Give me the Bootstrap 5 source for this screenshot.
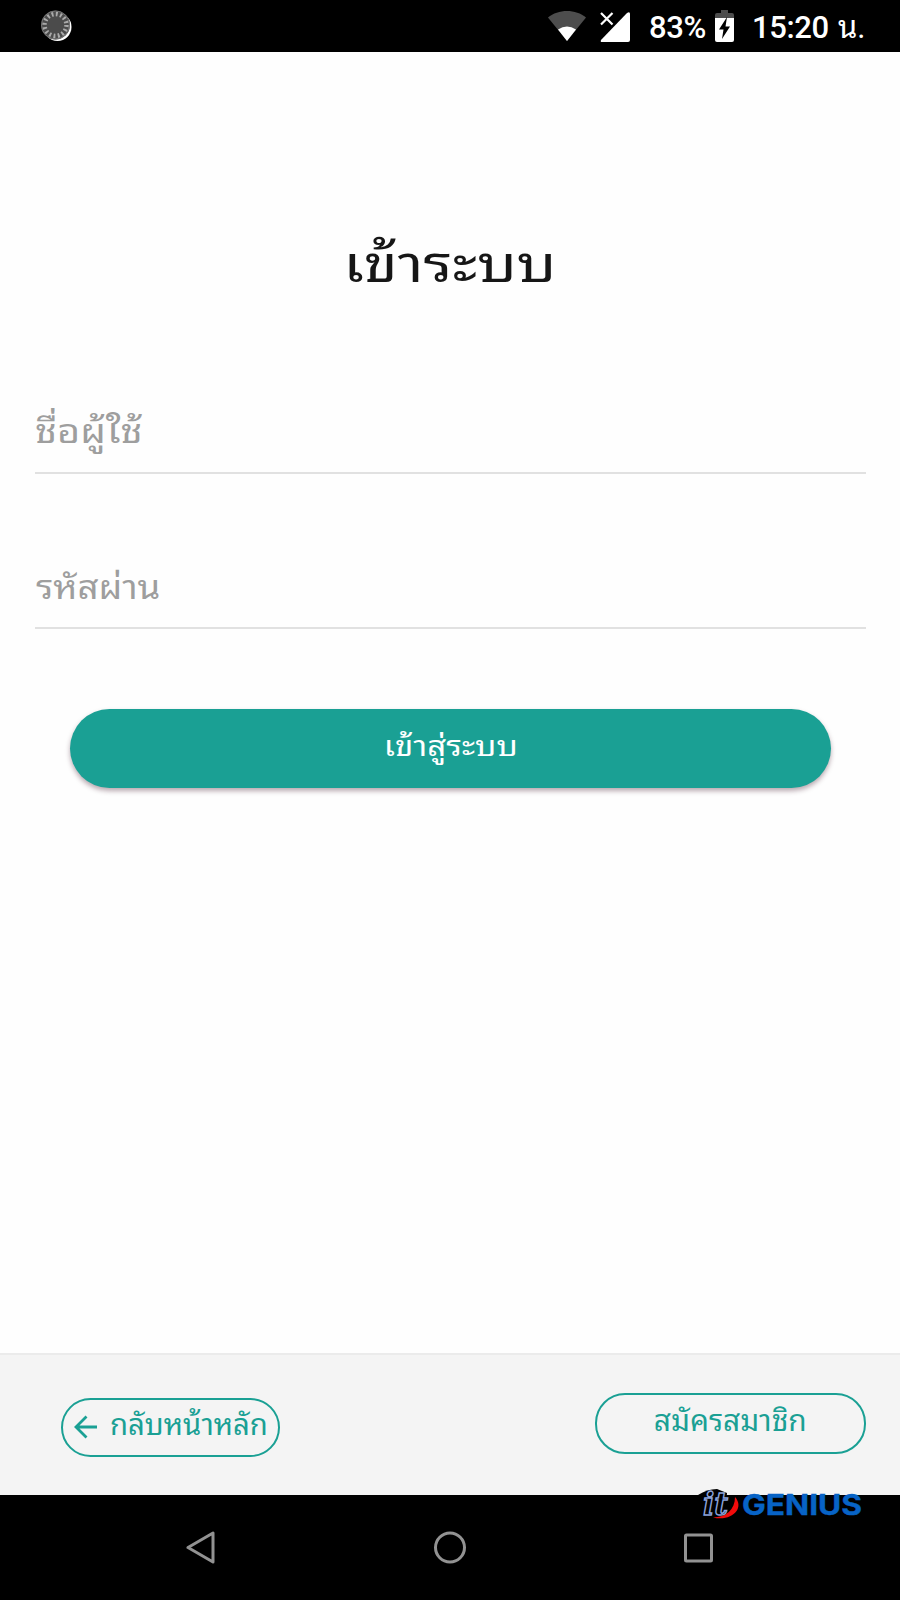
<!DOCTYPE html>
<html lang="th">
<head>
<meta charset="utf-8">
<meta name="viewport" content="width=device-width, initial-scale=1">
<title>เข้าระบบ</title>
<link href="https://cdn.jsdelivr.net/npm/bootstrap@5.3.0/dist/css/bootstrap.min.css" rel="stylesheet">
<style>
body{font-family:Roboto,"Noto Sans Thai Looped","Noto Looped Thai",Loma,"Droid Sans Thai",Waree,Garuda,Umpush,sans-serif;background:#fefefe;color:#161616}
.screen{height:1600px;width:900px;overflow:hidden}
svg{display:block;flex:none}
.statusbar{height:52px;background:#000;color:#fff;font-size:31px;font-weight:500;line-height:56px;padding:0 36px 0 40px}
.statusbar span{white-space:nowrap}
.status-icon{margin-top:9px}
.signal{margin-left:14px}
.battery{margin-left:11px}
.pct{width:55px;margin-left:18px;letter-spacing:-.4px}
.time{width:76px;margin-left:18px;letter-spacing:-.4px}
.thai-n{width:26px;margin-left:10px;font-weight:400}
.login-title{font-size:51px;line-height:80px;margin:173px 0 0;font-weight:400}
.login-title span{display:inline-block;transform:scaleX(1.2)}
.login-form{padding:0 34px 0 35px}
.field-row{height:155px;border-bottom:2px solid #e1e1e1;padding-top:84px;line-height:60px;font-size:33px;color:#9e9e9e}
.field-row label{display:inline-block;transform-origin:0 50%;white-space:nowrap}
.field-user{margin-top:14px;padding-top:83px}
.field-user label{transform:scaleX(1.2)}
.field-pass label{transform:scaleX(1.11);margin-left:1px}
.btn-teal{margin:80px 35px 0;height:79px;border:0;border-radius:40px;background:#1aa094;color:#fff;font-size:28px;padding:0 0 3px;box-shadow:0 3px 5px rgba(60,20,40,.36)}
.btn-teal span{display:inline-block;transform:scaleX(1.18)}
.bottombar{height:142px;background:#f4f4f4;border-top:2px solid #ebebeb;padding:0 34px 0 61px}
.btn-pill{border:2px solid #1aa094;border-radius:30px;color:#1aa094;padding:0;font-size:29px;white-space:nowrap}
.btn-home{width:219px;height:59px;margin-top:43px;line-height:51px;padding-left:11px}
.home-label{margin-left:12px;display:inline-block;transform:scaleX(1.01);transform-origin:0 50%}
.btn-join{width:271px;height:61px;margin-top:38px;padding-bottom:4px}
.btn-join span{display:inline-block;transform:scaleX(1.03)}
.navkeys{height:105px;background:#000;padding:33px 186px 0}
.brand{left:695px;top:1484px}
</style>
</head>
<body>
<main class="screen d-flex flex-column position-relative">
  <header class="statusbar d-flex">
    <svg class="status-icon" width="33" height="33" viewBox="0 0 33 33">
      <circle cx="17.500" cy="18" r="14" fill="#fff"/>
      <circle cx="15.500" cy="16" r="14.500" fill="#4b4b4b"/>
      <circle cx="15.500" cy="16" r="11" fill="none" stroke="#aaa" stroke-width="4.500" stroke-dasharray="1.900 2.420"/>
      <circle cx="15.500" cy="16" r="14" fill="none" stroke="#777" stroke-width="1"/>
    </svg>
    <svg class="ms-auto" width="38" height="52" viewBox="0 0 38 52"><path d="M19 41 0 17.500C10 8.700 28 8.700 38 17.500Z" fill="#4d4d4d"/><path d="M19 41 10 29.500Q19 23.500 28 29.500Z" fill="#fff"/></svg>
    <svg class="signal" width="31" height="52" viewBox="0 0 31 52"><path d="M30 14v26q0 2-2 2H2q-2 0-1-2L27 13q3-2 3 1Z" fill="#fff"/><path d="m1 13 11.500 11.500M12.500 13 1 24.500" stroke="#fff" stroke-width="2.200"/></svg>
    <span class="pct">83%</span>
    <svg class="battery" width="19" height="52" viewBox="0 0 19 52"><path d="M0 18v-3q0-2 2-2h4v-3h7v3h4q2 0 2 2v3Z" fill="#4d4d4d"/><path d="M0 18h19v22q0 2-2 2H2q-2 0-2-2Z" fill="#fff"/><path d="M12 17 4 29.500h4.500L7 39l8-12.500h-4.500Z" fill="#000"/></svg>
    <span class="time">15:20</span><span class="thai-n">น.</span>
  </header>
  <h1 class="login-title text-center"><span>เข้าระบบ</span></h1>
  <form class="login-form d-flex flex-column">
    <div class="field-row field-user"><label>ชื่อผู้ใช้</label></div>
    <div class="field-row field-pass"><label>รหัสผ่าน</label></div>
    <button type="button" class="btn btn-teal"><span>เข้าสู่ระบบ</span></button>
  </form>
  <footer class="mt-auto">
    <div class="bottombar d-flex justify-content-between align-items-start">
      <button class="btn btn-pill btn-home d-flex">
        <svg width="24" height="55" viewBox="0 0 24 55"><path d="M23 27H3M12.500 16.500 2 27l10.500 10.500" fill="none" stroke="#1aa094" stroke-width="2.800"/></svg>
        <span class="home-label">กลับหน้าหลัก</span>
      </button>
      <button class="btn btn-pill btn-join"><span>สมัครสมาชิก</span></button>
    </div>
    <nav class="navkeys d-flex justify-content-between">
      <svg width="29" height="38" viewBox="0 0 29 38"><path d="M27 5v29L2 19.500Z" fill="none" stroke="#929292" stroke-width="3" stroke-linejoin="round"/></svg>
      <svg width="33" height="38" viewBox="0 0 33 38"><circle cx="17" cy="19.500" r="14.500" fill="none" stroke="#929292" stroke-width="3"/></svg>
      <svg width="30" height="38" viewBox="0 0 30 38"><rect x="1.500" y="7" width="26" height="26" rx="1" fill="none" stroke="#929292" stroke-width="3"/></svg>
    </nav>
  </footer>
  <svg class="brand position-absolute" width="170" height="40" viewBox="0 0 170 40">
    <path d="M3 11Q12 5 22 5l10 4-2 22H5Z" fill="#000"/>
    <path d="M40 13C50 24 37 38 18 33.500 31 33 40 26 40 13Z" fill="#f20b0b"/>
    <text x="8" y="31" font-family="DejaVu Serif" font-size="32" font-weight="700" font-style="italic" fill="#000" stroke="#8ba3dc" stroke-width="1.500" textLength="25" lengthAdjust="spacingAndGlyphs">it</text>
    <text x="47" y="31" font-family="Inter" font-size="28" font-weight="700" fill="#0763c6" stroke="#0763c6" stroke-width=".4" textLength="120" lengthAdjust="spacingAndGlyphs">GENIUS</text>
  </svg>
</main>
<script src="https://cdn.jsdelivr.net/npm/bootstrap@5.3.0/dist/js/bootstrap.bundle.min.js"></script>
</body>
</html>
